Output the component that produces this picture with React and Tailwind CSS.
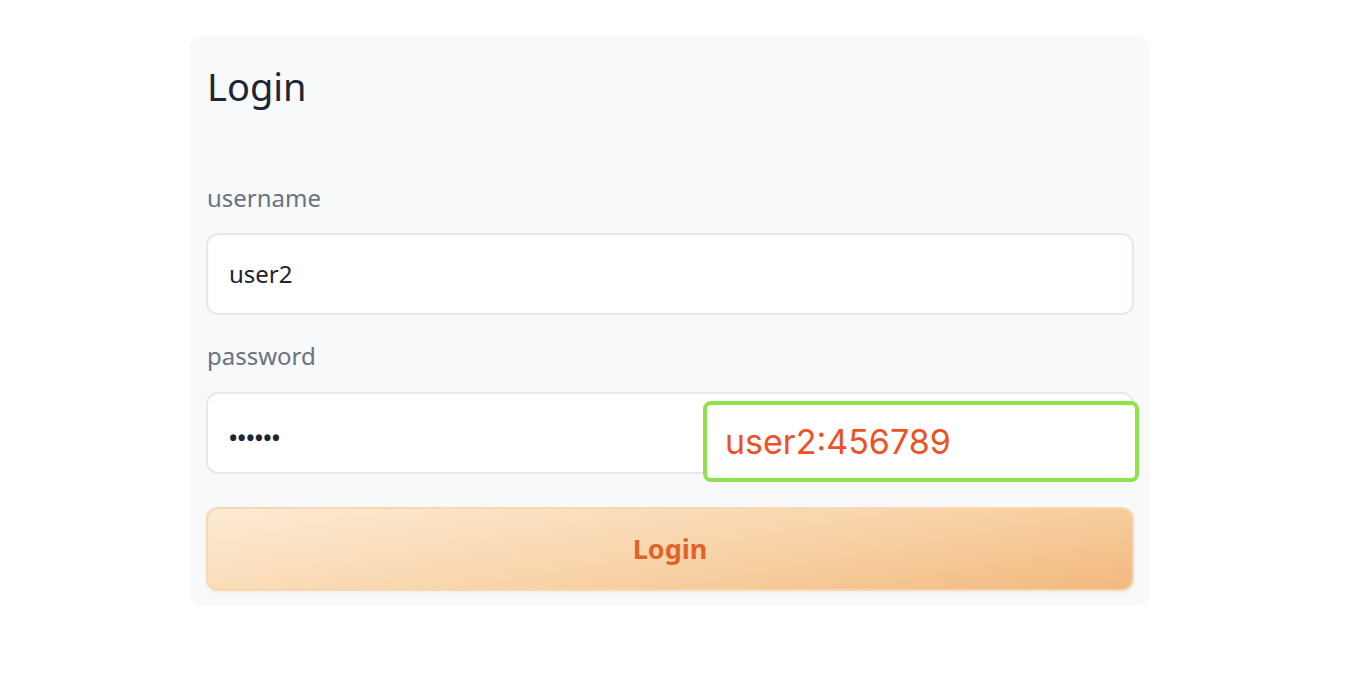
export default function App() {
  return (
    <div className="w-[1362px] h-[678px] bg-white relative" style={{ fontFamily: '"Noto Sans", sans-serif' }}>
      <div className="absolute left-[190px] top-[36px] w-[960px] h-[570px] bg-[#f8f9fb] rounded-[12px] px-[16px] pt-[24px]">
        <h1 className="text-[38px] leading-[52px] text-[#1e2533] ml-[1px]">Login</h1>
        <div className="mt-[70px] text-[24px] leading-[32px] text-[#6b7280] ml-[1px]">username</div>
        <div className="mt-[19px] h-[82px] bg-white border-2 border-[#e7e8ec] rounded-[12px] flex items-center px-[21px] text-[24px] text-[#1e2533] shadow-[inset_0_1px_3px_rgba(0,0,0,0.04)]">user2</div>
        <div className="mt-[25px] text-[24px] leading-[32px] text-[#6b7280] ml-[1px]">password</div>
        <div className="mt-[20px] h-[82px] bg-white border-2 border-[#e7e8ec] rounded-[12px] flex items-center px-[21px] pt-[8px] text-[22px] font-bold tracking-[0.3px] text-[#1e2533]">••••••</div>
        <button className="mt-[33px] w-full h-[84px] rounded-[12px] border-2 border-[#fad7ad] bg-[linear-gradient(170deg,#fdebd5_0%,#f8d3a8_55%,#f2b97e_100%)] text-[27px] font-bold text-[#e0632b] shadow-[0_2px_4px_rgba(0,0,0,0.05)]">Login</button>
      </div>
      <div className="absolute left-[703px] top-[401px] w-[436px] h-[81px] bg-white border-[4px] border-[#8ee24a] rounded-[8px] flex items-center pl-[18px] text-[34px] text-[#ec5226]" style={{ fontFamily: 'Inter, sans-serif' }}>user2:456789</div>
    </div>
  );
}
